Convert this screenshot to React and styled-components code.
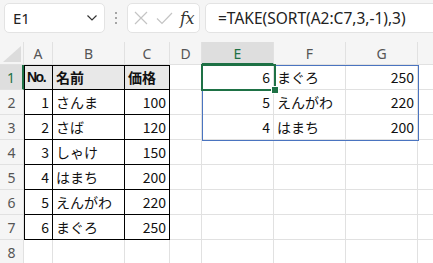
import React from 'react'
import styled, { createGlobalStyle } from 'styled-components'

const GREEN = '#1e7145'
const GRID = '#e1e1e1'

const GlobalStyle = createGlobalStyle`
  html, body {
    margin: 0;
    padding: 0;
    background: #f5f5f5;
  }
  body {
    font-family: "Noto Sans", "Noto Sans CJK JP", sans-serif;
    overflow: hidden;
  }
`

const columns = [
  { name: 'A', width: 29 },
  { name: 'B', width: 72 },
  { name: 'C', width: 45 },
  { name: 'D', width: 32 },
  { name: 'E', width: 72, active: true },
  { name: 'F', width: 72 },
  { name: 'G', width: 72 },
  { name: 'H', width: 72 },
]

// each row: values for A..H ; numbers are right aligned
const rows = [
  ['No.', '名前', '価格', '', 6, 'まぐろ', 250, ''],
  [1, 'さんま', 100, '', 5, 'えんがわ', 220, ''],
  [2, 'さば', 120, '', 4, 'はまち', 200, ''],
  [3, 'しゃけ', 150, '', '', '', '', ''],
  [4, 'はまち', 200, '', '', '', '', ''],
  [5, 'えんがわ', 220, '', '', '', '', ''],
  [6, 'まぐろ', 250, '', '', '', '', ''],
  ['', '', '', '', '', '', '', ''],
]

export default function App() {
  return (
    <>
      <GlobalStyle />
      <Page>
        <FormulaBar>
          <NameBox>
            <span>E1</span>
            <svg width="12" height="8" viewBox="0 0 12 8">
              <path d="M1.5 1.5 L6 6 L10.5 1.5" fill="none" stroke="#333" strokeWidth="1.2" />
            </svg>
          </NameBox>
          <Dots>
            <i /><i /><i />
          </Dots>
          <FuncBox>
            <svg width="14" height="14" viewBox="0 0 14 14">
              <path d="M1 1 L13 13 M13 1 L1 13" stroke="#c4c4c4" strokeWidth="1.2" />
            </svg>
            <svg width="17" height="13" viewBox="0 0 17 13">
              <path d="M1 6.5 L6 11.5 L16 1" fill="none" stroke="#c4c4c4" strokeWidth="1.2" />
            </svg>
            <Fx>fx</Fx>
          </FuncBox>
          <FormulaBox>=TAKE(SORT(A2:C7,3,-1),3)</FormulaBox>
        </FormulaBar>

        <Sheet $cols={columns.map((c) => c.width + 'px').join(' ')}>
          <Corner>
            <svg width="18" height="16" viewBox="0 0 18 16">
              <polygon points="18,0 18,16 0,16" fill="#dcdcdc" />
            </svg>
          </Corner>
          {columns.map((c) => (
            <ColHeader key={c.name} $active={c.active}>{c.name}</ColHeader>
          ))}

          {rows.map((row, r) => (
            <React.Fragment key={r}>
              <RowHeader $active={r === 0}>{r + 1}</RowHeader>
              {row.map((v, c) => {
                const inTable = r < 7 && c < 3
                return (
                  <Cell
                    key={c}
                    $num={typeof v === 'number'}
                    $table={inTable}
                    $head={inTable && r === 0}
                    $left={inTable && c === 0}
                    $top={inTable && r === 0}
                  >
                    {v}
                  </Cell>
                )
              })}
            </React.Fragment>
          ))}

          <Spill />
          <Selection>
            <FillHandle />
          </Selection>
        </Sheet>
      </Page>
    </>
  )
}

const Page = styled.div`
  width: 433px;
  height: 263px;
  overflow: hidden;
  background: #f5f5f5;
`

const FormulaBar = styled.div`
  display: flex;
  align-items: center;
  height: 42px;
  padding: 3px 0 9px 4px;
  box-sizing: border-box;
`

const Box = styled.div`
  height: 30px;
  box-sizing: border-box;
  background: #fff;
  border: 1px solid #e3e3e3;
  border-radius: 5px;
  display: flex;
  align-items: center;
`

const NameBox = styled(Box)`
  width: 101px;
  padding: 0 6px 0 8px;
  justify-content: space-between;
  font-size: 15px;
  color: #222;
`

const Dots = styled.div`
  width: 22px;
  display: flex;
  flex-direction: column;
  align-items: center;
  gap: 3px;

  i {
    width: 2px;
    height: 2px;
    background: #8a8a8a;
    border-radius: 1px;
  }
`

const FuncBox = styled(Box)`
  width: 73px;
  padding: 0 5px 0 6px;
  justify-content: space-between;
`

const Fx = styled.span`
  font-family: "DejaVu Serif", "Liberation Serif", serif;
  font-style: italic;
  font-size: 16px;
  color: #333;
  letter-spacing: -0.5px;
`

const FormulaBox = styled(Box)`
  margin-left: 5px;
  flex: 1;
  min-width: 0;
  margin-right: -12px;
  padding-left: 12px;
  font-size: 15.5px;
  color: #222;
  white-space: nowrap;
`

const Sheet = styled.div`
  position: relative;
  display: grid;
  grid-template-columns: 24px ${(p) => p.$cols};
  grid-template-rows: 23px repeat(8, 25px);
  background: #fff;
  font-family: "Noto Sans CJK JP", "Noto Sans", sans-serif;
  font-size: 14px;
`

const Corner = styled.div`
  background: #f5f5f5;
  border-right: 1px solid ${GRID};
  border-bottom: 1px solid ${GRID};
  box-sizing: border-box;
  display: flex;
  align-items: flex-end;
  justify-content: flex-end;
  padding: 0 2px 2px 0;
`

const ColHeader = styled.div`
  box-sizing: border-box;
  display: flex;
  align-items: center;
  justify-content: center;
  background: ${(p) => (p.$active ? '#dedede' : '#f5f5f5')};
  color: ${(p) => (p.$active ? GREEN : '#555')};
  border-right: 1px solid ${GRID};
  border-bottom: ${(p) => (p.$active ? `2px solid ${GREEN}` : `1px solid ${GRID}`)};
  font-family: "Noto Sans", sans-serif;
  font-size: 14px;
  padding-top: 1px;
`

const RowHeader = styled.div`
  box-sizing: border-box;
  display: flex;
  align-items: center;
  justify-content: center;
  background: ${(p) => (p.$active ? '#dedede' : '#f5f5f5')};
  color: ${(p) => (p.$active ? GREEN : '#555')};
  border-bottom: 1px solid ${GRID};
  border-right: ${(p) => (p.$active ? `2px solid ${GREEN}` : `1px solid ${GRID}`)};
  font-family: "Noto Sans", sans-serif;
  font-size: 14px;
`

const Cell = styled.div`
  box-sizing: border-box;
  display: flex;
  align-items: center;
  justify-content: ${(p) => (p.$num ? 'flex-end' : 'flex-start')};
  padding: 0 3px 0 3px;
  white-space: nowrap;
  overflow: hidden;
  color: #111;
  background: ${(p) => (p.$head ? '#e8e8e8' : '#fff')};
  font-weight: ${(p) => (p.$head ? 700 : 400)};
  border-right: 1px solid ${(p) => (p.$table ? '#000' : GRID)};
  border-bottom: 1px solid ${(p) => (p.$table ? '#000' : GRID)};
  box-shadow: ${(p) =>
    [p.$left && 'inset 1px 0 0 #000', p.$top && 'inset 0 1px 0 #000'].filter(Boolean).join(', ') || 'none'};
  ${(p) => p.$head && p.$left && 'letter-spacing: -1.5px; font-family: "Liberation Sans Narrow", "Liberation Sans", sans-serif;'}
`

const Spill = styled.div`
  position: absolute;
  left: 202px;
  top: 23px;
  width: 217px;
  height: 76px;
  box-sizing: border-box;
  border: 1px solid #4a74c0;
  pointer-events: none;
`

const Selection = styled.div`
  position: absolute;
  left: 201px;
  top: 22px;
  width: 75px;
  height: 27px;
  box-sizing: border-box;
  border: 2px solid ${GREEN};
  pointer-events: none;
`

const FillHandle = styled.div`
  position: absolute;
  right: -5px;
  bottom: -5px;
  width: 6px;
  height: 6px;
  background: ${GREEN};
  border: 1px solid #fff;
`
